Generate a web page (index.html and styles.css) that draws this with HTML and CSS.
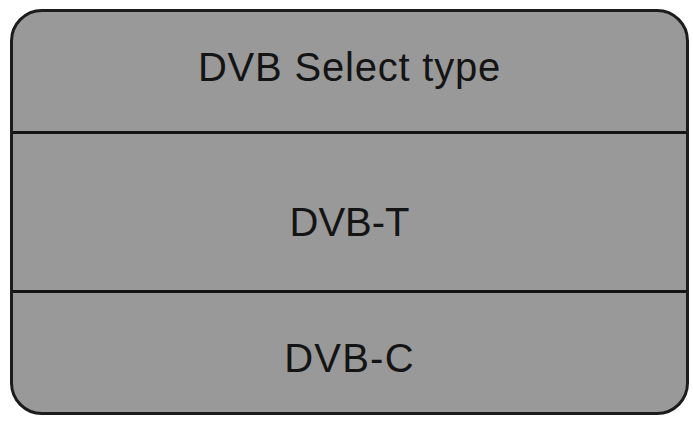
FILE: index.html
```html
<!DOCTYPE html>
<html>
<head>
<meta charset="utf-8">
<link rel="stylesheet" href="styles.css">
</head>
<body>
<div class="panel">
  <div class="row header"><span class="label">DVB Select type</span></div>
  <div class="divider"></div>
  <div class="row option-t"><span class="label">DVB-T</span></div>
  <div class="divider"></div>
  <div class="row option-c"><span class="label">DVB-C</span></div>
</div>
</body>
</html>
```
FILE: styles.css
```css
html, body {
  margin: 0;
  padding: 0;
  background: #ffffff;
}
body {
  width: 693px;
  height: 423px;
  overflow: hidden;
  font-family: "Liberation Sans", Arial, sans-serif;
}
.panel {
  margin: 9px 0 0 10px;
  width: 673px;
  height: 400px;
  border: 3px solid #1c1c1c;
  border-radius: 32px;
  background: #999999;
  display: flex;
  flex-direction: column;
  overflow: hidden;
}
.divider {
  height: 3px;
  background: #141414;
  flex: none;
}
.row {
  display: flex;
  justify-content: center;
  align-items: flex-start;
  box-sizing: border-box;
  flex: none;
}
.label {
  font-size: 40px;
  line-height: 40px;
  color: #141414;
}
.header {
  height: 119px;
  padding-top: 35px;
}
.header .label {
  letter-spacing: 0.8px;
}
.option-t {
  height: 156px;
  padding-top: 68px;
}
.option-c {
  height: 119px;
  padding-top: 45px;
}
.option-c .label {
  letter-spacing: 1.2px;
}
```
